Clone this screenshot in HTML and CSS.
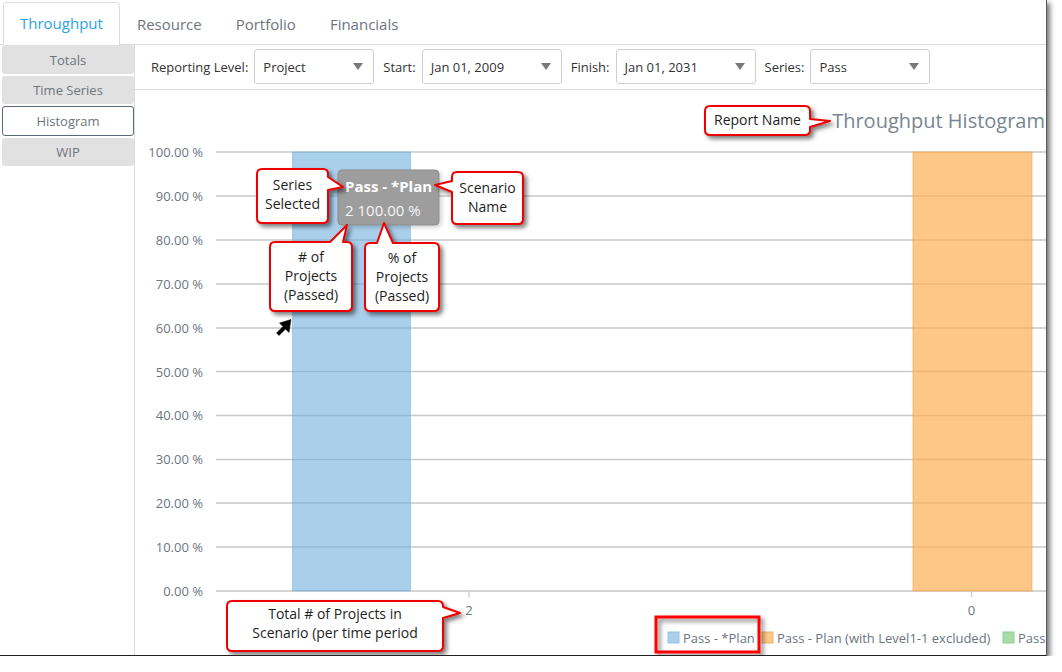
FILE: index.html
```html
<!DOCTYPE html>
<html>
<head>
<meta charset="utf-8">
<title>Throughput Histogram</title>
<link rel="stylesheet" href="styles.css">
</head>
<body>
<div class="frame">
  <div class="tabs">
    <div class="tab active">Throughput</div>
    <div class="tab">Resource</div>
    <div class="tab">Portfolio</div>
    <div class="tab">Financials</div>
  </div>
  <div class="body">
    <nav class="side">
      <div class="side-item">Totals</div>
      <div class="side-item">Time Series</div>
      <div class="side-item selected">Histogram</div>
      <div class="side-item">WIP</div>
    </nav>
    <div class="main">
      <div class="toolbar">
        <span class="lbl">Reporting Level:</span>
        <div class="sel w120"><span>Project</span><i class="caret"></i></div>
        <span class="lbl">Start:</span>
        <div class="sel w140"><span>Jan 01, 2009</span><i class="caret"></i></div>
        <span class="lbl">Finish:</span>
        <div class="sel w140"><span>Jan 01, 2031</span><i class="caret"></i></div>
        <span class="lbl">Series:</span>
        <div class="sel w120"><span>Pass</span><i class="caret"></i></div>
      </div>
      <div class="chart">
        <svg class="plot" width="911" height="565" viewBox="0 0 911 565" xmlns="http://www.w3.org/2000/svg">
          <defs>
            <filter id="sh" x="-30%" y="-30%" width="170%" height="180%">
              <feDropShadow dx="3" dy="3" stdDeviation="2.2" flood-color="#000" flood-opacity="0.5"/>
            </filter>
            <filter id="tsh" x="-20%" y="-20%" width="150%" height="160%">
              <feDropShadow dx="2" dy="2" stdDeviation="2" flood-color="#000" flood-opacity="0.18"/>
            </filter>
          </defs>
          <g class="grid">
            <line x1="81" y1="62" x2="911" y2="62"/>
            <line x1="81" y1="106" x2="911" y2="106"/>
            <line x1="81" y1="150" x2="911" y2="150"/>
            <line x1="81" y1="194" x2="911" y2="194"/>
            <line x1="81" y1="238" x2="911" y2="238"/>
            <line x1="81" y1="281.5" x2="911" y2="281.5"/>
            <line x1="81" y1="325.5" x2="911" y2="325.5"/>
            <line x1="81" y1="369.5" x2="911" y2="369.5"/>
            <line x1="81" y1="413" x2="911" y2="413"/>
            <line x1="81" y1="457" x2="911" y2="457"/>
            <line x1="81" y1="501" x2="911" y2="501"/>
          </g>
          <g class="ylab">
            <text x="68" y="67">100.00 %</text>
            <text x="68" y="111">90.00 %</text>
            <text x="68" y="155">80.00 %</text>
            <text x="68" y="199">70.00 %</text>
            <text x="68" y="243">60.00 %</text>
            <text x="68" y="287">50.00 %</text>
            <text x="68" y="330">40.00 %</text>
            <text x="68" y="374">30.00 %</text>
            <text x="68" y="418">20.00 %</text>
            <text x="68" y="462">10.00 %</text>
            <text x="68" y="506">0.00 %</text>
          </g>
          <rect class="bar-blue" x="157.5" y="62" width="118" height="439"/>
          <rect class="bar-orange" x="778" y="62" width="119" height="439"/>
          <g class="ticks">
            <line x1="334" y1="501" x2="334" y2="507"/>
            <line x1="836.5" y1="501" x2="836.5" y2="507"/>
          </g>
          <g class="xlab">
            <text x="334" y="525">2</text>
            <text x="836.5" y="525">0</text>
          </g>
          <g class="legend">
            <rect x="533" y="542" width="11" height="11" fill="#aacfeb" stroke="#93c1e6"/>
            <text x="548" y="553">Pass - *Plan</text>
            <rect x="627" y="542" width="11" height="11" fill="#fcc887" stroke="#f3b46c"/>
            <text x="642" y="553">Pass - Plan (with Level1-1 excluded)</text>
            <rect x="868" y="542" width="11" height="11" fill="#a9dcaa" stroke="#92cf94"/>
            <text x="883" y="553">Pass</text>
          </g>
          <rect class="redbox" x="521" y="527" width="103" height="35" filter="url(#sh)"/>
          <text class="title" x="910" y="38">Throughput Histogram</text>

          <g class="tooltip" filter="url(#tsh)">
            <rect x="203" y="80" width="101" height="55" rx="4"/>
          </g>
          <text class="tt1" x="210" y="102">Pass - *Plan</text>
          <text class="tt2" x="210" y="126">2 100.00 %</text>

          <g class="callouts">
            <path filter="url(#sh)" d="M127,79 H188 Q193,79 193,84 V87 L208,97 L193,100 V128 Q193,133 188,133 H127 Q122,133 122,128 V84 Q122,79 127,79 Z"/>
            <path filter="url(#sh)" d="M322,82 H383 Q388,82 388,87 V129 Q388,134 383,134 H322 Q317,134 317,129 V102 L300,95 L317,91 V87 Q317,82 322,82 Z"/>
            <path filter="url(#sh)" d="M140,152 H195 L212,135 L208,152 H212 Q217,152 217,157 V216 Q217,221 212,221 H140 Q135,221 135,216 V157 Q135,152 140,152 Z"/>
            <path filter="url(#sh)" d="M235,153 H242 L249,133 L258,153 H299 Q304,153 304,158 V216 Q304,221 299,221 H235 Q230,221 230,216 V158 Q230,153 235,153 Z"/>
            <path filter="url(#sh)" d="M575,16 H670 Q675,16 675,21 V29 L695,31 L675,37 V40 Q675,45 670,45 H575 Q570,45 570,40 V21 Q570,16 575,16 Z"/>
            <path filter="url(#sh)" d="M97,511 H303 Q308,511 308,516 V517 L325,523 L308,528 V556 Q308,561 303,561 H97 Q92,561 92,556 V516 Q92,511 97,511 Z"/>
          </g>
          <g class="ctext">
            <text x="157.5" y="100">Series</text>
            <text x="157.5" y="119">Selected</text>
            <text x="352.5" y="103">Scenario</text>
            <text x="352.5" y="122">Name</text>
            <text x="176" y="172"># of</text>
            <text x="176" y="191">Projects</text>
            <text x="176" y="210">(Passed)</text>
            <text x="267" y="173">% of</text>
            <text x="267" y="192">Projects</text>
            <text x="267" y="211">(Passed)</text>
            <text x="622.5" y="35">Report Name</text>
            <text x="200" y="529">Total # of Projects in</text>
            <text x="200" y="548">Scenario (per time period</text>
          </g>
          <polygon class="cursor" points="156,229.5 144.5,233 148,236.5 141.5,243 144,245.5 150.5,239 154,242.5"/>
        </svg>
      </div>
    </div>
  </div>
</div>
</body>
</html>
```
FILE: styles.css
```css
html, body {
  margin: 0;
  padding: 0;
  background: #fff;
}

body {
  font-family: "Open Sans", "Noto Sans", sans-serif;
  color: #333;
}

.frame {
  width: 1047px;
  height: 656px;
  box-sizing: border-box;
  border-right: 1px solid #5a5a5a;
  border-bottom: 1px solid #222;
  box-shadow: 3px 3px 5px rgba(0, 0, 0, 0.55);
  background: #fff;
  display: flex;
  flex-direction: column;
  overflow: hidden;
}

/* top tabs */
.tabs {
  height: 45px;
  box-sizing: border-box;
  border-bottom: 1px solid #dcdcdc;
  padding: 3px 0 0 3px;
  display: flex;
  align-items: flex-end;
  flex: none;
}

.tab {
  height: 41px;
  line-height: 40px;
  padding: 0 16px;
  border: 1px solid transparent;
  border-bottom: none;
  border-radius: 4px 4px 0 0;
  font-size: 15px;
  color: #6c757d;
  margin-bottom: -1px;
}

.tab.active {
  border-color: #dcdcdc;
  background: #fff;
  height: 42px;
  color: #2ba3e4;
}

/* body */
.body {
  flex: 1;
  display: flex;
  min-height: 0;
}

.side {
  width: 135px;
  box-sizing: border-box;
  padding-left: 2px;
  border-right: 1px solid #dcdcdc;
  display: flex;
  flex-direction: column;
  gap: 2px;
  flex: none;
}

.side-item {
  height: 28px;
  line-height: 28px;
  text-align: center;
  font-size: 13px;
  color: #6c757d;
  background: #e1e1e1;
  border-radius: 3px;
}

.side-item:first-child {
  height: 29px;
  line-height: 30px;
}

.side-item.selected {
  height: 30px;
  line-height: 28px;
  box-sizing: border-box;
  background: #fff;
  border: 1px solid #596a7b;
}

.main {
  flex: 1;
  display: flex;
  flex-direction: column;
  min-width: 0;
}

.toolbar {
  height: 45px;
  box-sizing: border-box;
  border-bottom: 1px solid #dcdcdc;
  display: flex;
  align-items: center;
  padding: 0 0 1px 16px;
  flex: none;
  font-size: 13px;
}

.lbl {
  color: #333;
  margin-right: 6px;
}

.sel {
  height: 35px;
  box-sizing: border-box;
  border: 1px solid #cfcfcf;
  border-radius: 3px;
  display: flex;
  align-items: center;
  justify-content: space-between;
  padding: 0 8px 0 8px;
  margin-right: 9px;
  color: #333;
  background: #fff;
}

.w120 { width: 120px; }
.w140 { width: 140px; }

.caret {
  width: 0;
  height: 0;
  border-left: 5.5px solid transparent;
  border-right: 5.5px solid transparent;
  border-top: 7px solid #7a7a7a;
  margin-right: 2px;
}

/* chart */
.chart {
  flex: 1;
  min-height: 0;
  overflow: hidden;
}

.plot {
  display: block;
  font-family: "Open Sans", "Noto Sans", sans-serif;
}

.grid line {
  stroke: #c9c9c9;
  stroke-width: 1.4;
}

.ylab text {
  font-size: 13px;
  fill: #6c7580;
  text-anchor: end;
}

.xlab text {
  font-size: 13px;
  fill: #6c7580;
  text-anchor: middle;
}

.ticks line {
  stroke: #c9c9c9;
  stroke-width: 1.2;
}

.bar-blue {
  fill: rgba(113, 175, 222, 0.6);
  stroke: rgba(113, 175, 222, 0.5);
  stroke-width: 1;
}

.bar-orange {
  fill: rgba(252, 176, 84, 0.7);
  stroke: rgba(245, 165, 70, 0.6);
  stroke-width: 1;
}

.legend text {
  font-size: 13px;
  fill: #6c7580;
}

.redbox {
  fill: none;
  stroke: #ff0000;
  stroke-width: 3;
}

.title {
  font-size: 20px;
  fill: #788692;
  text-anchor: end;
}

.tooltip rect {
  fill: #9d9d9d;
  stroke: #8c8c8c;
  stroke-width: 1;
}

.tt1 {
  font-size: 15px;
  font-weight: 700;
  fill: #ffffff;
}

.tt2 {
  font-size: 15px;
  fill: #f4f4f4;
}

.callouts path {
  fill: #fff;
  stroke: #ee0000;
  stroke-width: 2;
  stroke-linejoin: round;
}

.ctext text {
  font-size: 14px;
  fill: #1e1e1e;
  text-anchor: middle;
}

.cursor {
  fill: #000;
  stroke: #000;
  stroke-width: 0.5;
}
```
